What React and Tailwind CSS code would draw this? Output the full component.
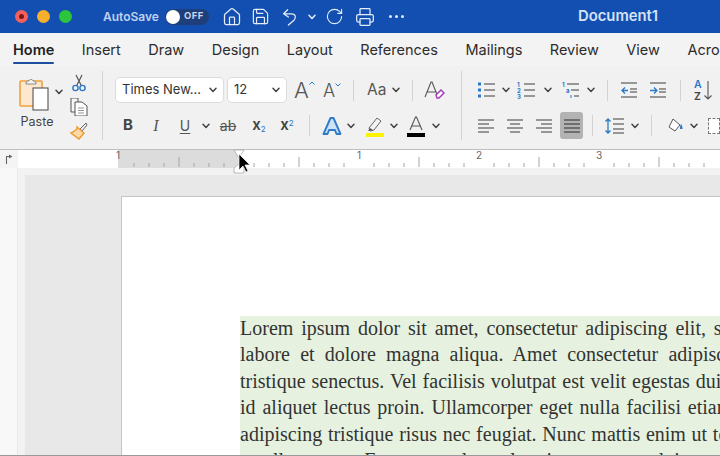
import React from "react";
import { Home, Save, RotateCw, Printer } from "lucide-react";

const Chev = ({ className = "", color = "#444" }) => (
  <svg viewBox="0 0 8 6" className={`w-2 h-[6px] shrink-0 ${className}`} fill="none" stroke={color} strokeWidth="1.5" strokeLinecap="round" strokeLinejoin="round">
    <path d="M1 1.2 4 4.4 7 1.2" />
  </svg>
);
const Sep = ({ className = "" }) => <div className={`w-px h-[21px] bg-[#d2d2d2] shrink-0 ${className}`} />;
const Svg = ({ className = "", vb = "0 0 18 18", children }) => (
  <svg viewBox={vb} className={`shrink-0 ${className}`} fill="none">{children}</svg>
);
const Lines = ({ rows, stroke = "#666" }) => (
  <>{rows.map(([x1, x2, y], i) => <path key={i} d={`M${x1} ${y}H${x2}`} stroke={stroke} strokeWidth="1.3" />)}</>
);

const tabs = ["Insert", "Draw", "Design", "Layout", "References", "Mailings", "Review", "View", "Acrobat"];

const lines = [
  ["Lorem ipsum dolor sit amet, consectetur adipiscing elit, sed do", "[word-spacing:2.85px]"],
  ["labore et dolore magna aliqua. Amet consectetur adipiscing", "[word-spacing:5.2px]"],
  ["tristique senectus. Vel facilisis volutpat est velit egestas dui id", "[word-spacing:1px]"],
  ["id aliquet lectus proin. Ullamcorper eget nulla facilisi etiam", "[word-spacing:1.9px]"],
  ["adipiscing tristique risus nec feugiat. Nunc mattis enim ut tellus", "[word-spacing:0.7px]"],
  ["a pellentesque. Fermentum leo vel orci porta non pulvinar", "[word-spacing:0.2px]"],
];

function Ruler() {
  const ticks = [];
  for (let k = 0; k < 41; k++) {
    const x = 101 + 15 * k;
    if ((k % 8) === 0) continue;
    const half = k % 4 === 0;
    ticks.push(<path key={k} d={`M${x} ${half ? 7 : 13}V17`} stroke="#a6a6a6" strokeWidth="1" />);
  }
  return (
    <svg viewBox="0 0 702 18" className="w-[702px] h-[18px] block">
      <rect width="702" height="18" fill="#fff" />
      <rect x="100" width="122" height="18" fill="#dcdcdc" />
      {ticks}
      {[[100, "1"], [341, "1"], [461, "2"], [581, "3"]].map(([x, t]) => (
        <text key={x + t} x={x} y="9" textAnchor="middle" fontSize="10" fill="#666" fontFamily="Inter, sans-serif">{t}</text>
      ))}
    </svg>
  );
}

export default function App() {
  return (
    <div className="relative w-[720px] h-[456px] overflow-hidden flex flex-col bg-[#e8e8e8] font-['Inter',sans-serif]">
      {/* Title bar */}
      <div className="h-[33px] shrink-0 bg-[#134fb0] flex items-center pl-[15px] text-[#d3dff3]">
        <span className="w-[13px] h-[13px] rounded-full bg-[#f4605c] flex items-center justify-center"><span className="w-[5px] h-[5px] rounded-full bg-[#7a1712]" /></span>
        <span className="w-[13px] h-[13px] rounded-full bg-[#f6ae2d] ml-[9px]" />
        <span className="w-[13px] h-[13px] rounded-full bg-[#2cc53c] ml-[9px]" />
        <span className="ml-[31px] text-[12px] font-semibold text-[#bfd2f0] w-[55px] whitespace-nowrap">AutoSave</span>
        <span className="ml-[7px] w-[44px] h-[16px] rounded-full bg-[#1f3f7a] flex items-center">
          <span className="w-[14px] h-[14px] rounded-full bg-white ml-px" />
          <span className="ml-[4px] text-[9.5px] font-bold tracking-[0.4px] text-[#c9d6ee]">OFF</span>
        </span>
        <Home className="w-[20px] h-[20px] ml-[13px] text-[#e4ecf8]" strokeWidth={1.5} />
        <Save className="w-[19px] h-[19px] ml-[9px] text-[#e4ecf8]" strokeWidth={1.5} />
        <Svg vb="0 0 20 22" className="w-[16px] h-[20px] ml-[12px]">
          <path d="M7 2 2 7l6 4M2 7h10c5 0 6 5 3 8l-7 6" stroke="#e4ecf8" strokeWidth="1.6" strokeLinecap="round" strokeLinejoin="round" />
        </Svg>
        <Chev className="ml-[10px]" color="#e4ecf8" />
        <RotateCw className="w-[19px] h-[19px] ml-[9px] text-[#e4ecf8]" strokeWidth={1.4} />
        <Printer className="w-[20px] h-[20px] ml-[11px] text-[#e4ecf8]" strokeWidth={1.5} />
        <span className="ml-[14px] flex gap-[3px]">
          <span className="w-[3px] h-[3px] rounded-full bg-[#e4ecf8]" />
          <span className="w-[3px] h-[3px] rounded-full bg-[#e4ecf8]" />
          <span className="w-[3px] h-[3px] rounded-full bg-[#e4ecf8]" />
        </span>
        <span className="ml-[174px] text-[14.8px] font-semibold text-[#d6e2f5] whitespace-nowrap">Document1</span>
      </div>

      {/* Tabs */}
      <div className="h-[33px] shrink-0 bg-[#f3f3f3] flex pl-[13px] gap-[27.5px] text-[14.5px] text-[#2c2c2c] whitespace-nowrap">
        <div className="relative h-full flex items-center font-semibold text-[#222]">
          Home
          <span className="absolute left-0 right-0 bottom-[2px] h-[2px] bg-[#1f4e9e] rounded-full" />
        </div>
        {tabs.map((t) => <div key={t} className="h-full flex items-center">{t}</div>)}
      </div>

      {/* Ribbon */}
      <div className="h-[84px] shrink-0 bg-[#f1f1f1] border-b border-[#bfbfbf] flex items-start text-[#444]">
        {/* Clipboard */}
        <div className="w-[102px] shrink-0 flex pl-[19px] pt-[11px]">
          <div className="w-[36px] flex flex-col items-center">
            <Svg vb="0 0 32 34" className="w-[32px] h-[34px] -ml-[4px]">
              <rect x="1" y="4" width="22" height="25" rx="1" fill="#fbe8cf" stroke="#f2a13a" strokeWidth="1.6" />
              <path d="M7 6c0-2 2-2 3-2 0-2 4-2 4 0 1 0 3 0 3 2v1H7z" fill="#f4f4f4" stroke="#888" strokeWidth="1" />
              <rect x="14" y="11" width="15" height="22" fill="#fff" stroke="#555" strokeWidth="1.1" />
            </Svg>
            <span className="mt-[2px] text-[12.5px] text-[#444]">Paste</span>
          </div>
          <Chev className="ml-[0px] mt-[12px]" />
          <div className="ml-[7px] -mt-[3px] flex flex-col items-center gap-[6px]">
            <Svg className="w-[18px] h-[18px]">
              <path d="M6 1l5.500 11M12 1 6.500 12" stroke="#555" strokeWidth="1.200" />
              <circle cx="5.500" cy="14" r="2.600" stroke="#2a78c8" strokeWidth="1.400" />
              <circle cx="12.500" cy="14" r="2.600" stroke="#2a78c8" strokeWidth="1.400" />
            </Svg>
            <Svg className="w-[18px] h-[18px]">
              <path d="M1 0h7v14H1z" fill="#f7f7f7" stroke="#555" />
              <path d="M5 4h7l5 4v10H5z" fill="#fff" stroke="#555" />
              <path d="M8 10h6M8 12.500h6M8 15h6" stroke="#777" strokeWidth=".8" />
            </Svg>
            <Svg className="w-[18px] h-[18px]">
              <path d="M16 1 10 7l2 2 5-6z" fill="#eee" stroke="#666" />
              <path d="M7 5l7 6-5 6-8-6 2-1 4-3z" fill="#fbd9a8" stroke="#f0982d" strokeWidth="1.400" />
            </Svg>
          </div>
        </div>
        <div className="w-px h-[69px] mt-[5px] bg-[#d4d4d4] shrink-0" />

        {/* Font */}
        <div className="w-[358px] shrink-0 flex flex-col pt-[11px]">
          <div className="h-[26px] flex items-center">
            <div className="ml-[12px] w-[109px] h-[26px] bg-white border border-[#dcdcdc] rounded-[5px] flex items-center justify-between pl-[6px] pr-[6px] text-[13px] text-[#333] whitespace-nowrap">
              Times New...<Chev />
            </div>
            <div className="ml-[3px] w-[60px] h-[26px] bg-white border border-[#dcdcdc] rounded-[5px] flex items-center justify-between pl-[6px] pr-[6px] text-[13px] text-[#333]">
              12<Chev />
            </div>
            <div className="ml-[7px] w-[20px] flex items-start text-[22px] leading-none text-[#555] font-light">A<Svg vb="0 0 6 4" className="w-[6px] h-[4px] mt-[2px]"><path d="M.5 3.500 3 1l2.500 2.500" stroke="#2a78c8" /></Svg></div>
            <div className="ml-[9px] w-[20px] flex items-start text-[18px] leading-none text-[#555] font-light pt-[2px]">A<Svg vb="0 0 6 4" className="w-[6px] h-[4px] mt-[1px]"><path d="M.5.5 3 3 5.500.5" stroke="#2a78c8" /></Svg></div>
            <Sep className="ml-[10px]" />
            <span className="ml-[13px] w-[22px] text-[15.5px] text-[#555] whitespace-nowrap">Aa</span>
            <Chev className="ml-[3px]" />
            <Sep className="ml-[12px]" />
            <Svg vb="0 0 22 20" className="ml-[10px] w-[22px] h-[20px]">
              <path d="M2 17 8 2h1l6 15M4.500 12h8" stroke="#555" strokeWidth="1.100" />
              <path d="M13 15l5-5 3 3-5 5h-2z" fill="#fff" stroke="#a43bb8" strokeWidth="1.500" />
            </Svg>
          </div>
          <div className="h-[27px] mt-[9px] flex items-center">
            <span className="ml-[17px] w-[16px] text-center text-[15px] font-bold text-[#444]">B</span>
            <span className="ml-[12px] w-[16px] text-center text-[16px] italic font-['Liberation_Serif',serif] text-[#555]">I</span>
            <span className="ml-[13px] w-[16px] text-center text-[14px] underline underline-offset-2 text-[#555]">U</span>
            <Chev className="ml-[9px]" />
            <span className="ml-[9px] w-[18px] text-center text-[14px] line-through text-[#555]">ab</span>
            <span className="ml-[13px] w-[18px] text-center text-[15px] font-semibold text-[#444] whitespace-nowrap">x<sub className="text-[8px] text-[#2a78c8] font-normal">2</sub></span>
            <span className="ml-[10px] w-[18px] text-center text-[15px] font-semibold text-[#444] whitespace-nowrap">x<sup className="text-[8px] text-[#2a78c8] font-normal">2</sup></span>
            <Sep className="ml-[13px]" />
            <Svg vb="0 0 22 20" className="ml-[11px] w-[22px] h-[20px]">
              <path d="M2.500 18 9.500 2h3l7 16h-4l-1.500-4h-6L6.500 18z" fill="#cfe3f7" stroke="#2d7ccc" strokeWidth="1.900" strokeLinejoin="round" />
            </Svg>
            <Chev className="ml-[4px]" />
            <Svg vb="0 0 20 22" className="ml-[10px] w-[20px] h-[22px]">
              <path d="M4 13 12 3l4 3-7 9-4 1z" fill="#f3f3f3" stroke="#666" />
              <path d="M3 16l2-3 3 2z" fill="#555" />
              <rect x="1" y="18" width="18" height="4" fill="#fdf200" />
            </Svg>
            <Chev className="ml-[5px]" />
            <Svg vb="0 0 20 22" className="ml-[8px] w-[20px] h-[22px]">
              <path d="M4 15 9.500 2h1L16 15M6 11h8" stroke="#555" strokeWidth="1.100" />
              <rect x="1" y="18" width="18" height="4" fill="#000" />
            </Svg>
            <Chev className="ml-[6px]" />
          </div>
        </div>
        <div className="w-px h-[69px] mt-[5px] bg-[#d4d4d4] shrink-0" />

        {/* Paragraph */}
        <div className="flex-1 flex flex-col pt-[11px] overflow-hidden">
          <div className="h-[26px] flex items-center">
            <Svg className="ml-[15px] w-[18px] h-[18px]">
              <rect x="1" y="1.500" width="3" height="3" fill="#2a78c8" /><rect x="1" y="7.500" width="3" height="3" fill="#2a78c8" /><rect x="1" y="13.500" width="3" height="3" fill="#2a78c8" />
              <Lines rows={[[7, 18, 3], [7, 18, 9], [7, 18, 15]]} />
            </Svg>
            <Chev className="ml-[7px]" />
            <Svg className="ml-[7px] w-[18px] h-[18px]">
              <text x="0" y="6" fontSize="6" fontWeight="700" fill="#2a78c8">1</text><text x="0" y="12" fontSize="6" fontWeight="700" fill="#2a78c8">2</text><text x="0" y="18" fontSize="6" fontWeight="700" fill="#2a78c8">3</text>
              <Lines rows={[[7, 18, 3], [7, 18, 9], [7, 18, 15]]} />
            </Svg>
            <Chev className="ml-[9px]" />
            <Svg className="ml-[10px] w-[18px] h-[18px]">
              <text x="0" y="6" fontSize="6" fontWeight="700" fill="#2a78c8">1</text><text x="4" y="12" fontSize="6" fontWeight="700" fill="#2a78c8">a</text>
              <Lines rows={[[5, 17, 3], [9, 17, 9], [12, 17, 15]]} />
              <path d="M9 14v3" stroke="#2a78c8" />
            </Svg>
            <Chev className="ml-[7px]" />
            <Sep className="ml-[12px]" />
            <Svg className="ml-[13px] w-[16px] h-[18px]" vb="0 0 16 18">
              <Lines rows={[[0, 16, 2], [9, 16, 8], [9, 16, 11], [0, 16, 16]]} />
              <path d="M1 9.500h6M4 6.500l-3 3 3 3" stroke="#2a78c8" strokeWidth="1.300" />
            </Svg>
            <Svg className="ml-[13px] w-[16px] h-[18px]" vb="0 0 16 18">
              <Lines rows={[[0, 16, 2], [9, 16, 8], [9, 16, 11], [0, 16, 16]]} />
              <path d="M0 9.500h6M4 6.500l3 3-3 3" stroke="#2a78c8" strokeWidth="1.300" />
            </Svg>
            <Sep className="ml-[14px]" />
            <Svg className="ml-[13px] w-[18px] h-[22px]" vb="0 0 18 22">
              <text x="0" y="9" fontSize="10.500" fontWeight="600" fill="#2a78c8">A</text>
              <text x="0" y="21" fontSize="10.500" fontWeight="600" fill="#444">Z</text>
              <path d="M14 2v18M10.500 16.500 14 20l3.500-3.500" stroke="#555" strokeWidth="1.100" />
            </Svg>
          </div>
          <div className="h-[27px] mt-[9px] flex items-center">
            <Svg className="ml-[16px] w-[16px] h-[18px]" vb="0 0 16 18"><Lines rows={[[0, 16, 3], [0, 11, 7], [0, 16, 11], [0, 11, 15]]} /></Svg>
            <Svg className="ml-[13px] w-[16px] h-[18px]" vb="0 0 16 18"><Lines rows={[[0, 16, 3], [3, 13, 7], [0, 16, 11], [3, 13, 15]]} /></Svg>
            <Svg className="ml-[13px] w-[16px] h-[18px]" vb="0 0 16 18"><Lines rows={[[0, 16, 3], [5, 16, 7], [0, 16, 11], [5, 16, 15]]} /></Svg>
            <div className="ml-[8px] w-[27px] h-[27px] rounded-[3px] bg-[#b3b3b3] flex items-center justify-center">
              <Svg className="w-[16px] h-[18px]" vb="0 0 16 18"><Lines stroke="#4b4b4b" rows={[[0, 16, 3], [0, 16, 7], [0, 16, 11], [0, 16, 15]]} /></Svg>
            </div>
            <Sep className="ml-[9px]" />
            <Svg className="ml-[12px] w-[19px] h-[18px]" vb="0 0 19 18">
              <Lines rows={[[8, 19, 2], [8, 19, 7], [8, 19, 12], [8, 19, 16]]} />
              <path d="M3 2v14M.5 4.500 3 2l2.500 2.500M.5 13.500 3 16l2.500-2.500" stroke="#2a78c8" strokeWidth="1.300" />
            </Svg>
            <Chev className="ml-[7px]" />
            <Sep className="ml-[12px]" />
            <Svg className="ml-[16px] w-[15px] h-[16px]" vb="0 0 15 16">
              <path d="M5 1 1 9l6 4 5-6z" fill="#fff" stroke="#555" />
              <path d="M13 6c1 1 1.500 3 1.500 5h-2.500c0-2 0-3 1-5z" fill="#2a78c8" />
            </Svg>
            <Chev className="ml-[7px]" />
            <div className="ml-[10px] w-[12px] h-[16px] border border-dashed border-[#777] bg-white shrink-0" />
          </div>
        </div>
      </div>

      {/* Ruler row */}
      <div className="h-[18px] shrink-0 flex bg-[#f4f4f4]">
        <div className="w-[18px] flex items-center justify-center">
          <Svg vb="0 0 8 10" className="w-[8px] h-[10px]"><path d="M1.500 10V2.500H4" stroke="#666" strokeWidth="1.100" /><path d="M4 .5 7.500 2.500 4 4.500z" fill="#666" /></Svg>
        </div>
        <Ruler />
      </div>

      {/* Document area */}
      <div className="flex-1 min-h-0 flex border-b border-[#9a9a9a]">
        <div className="w-[18px] shrink-0 bg-[#f8f8f8] border-r border-[#e8e8e8]" />
        <div className="w-[7px] shrink-0 bg-[#f2f2f2]" />
        <div className="flex-1 min-w-0 flex flex-col overflow-hidden">
          <div className="h-[7px] shrink-0 bg-[#f2f2f2]" />
          <div className="flex-1 min-h-0 bg-[#e8e8e8] pl-[96px] pt-[21px] overflow-hidden">
            <div className="h-full bg-white border-l border-t border-[#c4c4c4] pl-[119px] pt-[120px] overflow-hidden">
              <div className="bg-[#e6f2df] w-[600px] text-[20px] leading-[26.4px] text-[#333] font-['Liberation_Serif',serif] whitespace-nowrap -mt-[1px] -ml-[1px]">
                {lines.map(([t, c]) => <div key={t} className={`h-[26.4px] -translate-y-[1px] ${c}`}>{t}</div>)}
              </div>
            </div>
          </div>
        </div>
      </div>

      {/* Indent markers + cursor, over the ruler */}
      <svg viewBox="0 0 20 26" className="absolute left-[230px] top-[149px] w-[20px] h-[26px]" fill="none">
        <path d="M4 1h10L9 9z" fill="#fff" stroke="#aaa" strokeWidth=".8" />
        <path d="M9 15l-5 4v5h10v-5z" fill="#fff" stroke="#aaa" strokeWidth=".8" />
        <path d="M9 5v16l4-4 3 6 2-1-3-6h5z" fill="#000" stroke="#fff" strokeWidth=".7" />
      </svg>
    </div>
  );
}
